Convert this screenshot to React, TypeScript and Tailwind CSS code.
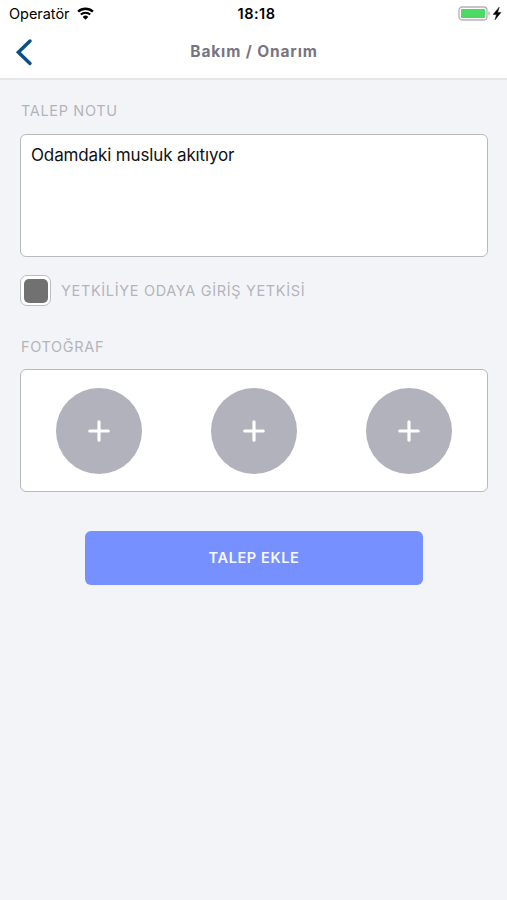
import type { ReactNode } from "react";

const PHOTO_SLOTS = [1, 2, 3];

function WifiIcon() {
  return (
    <svg width="17" height="13" viewBox="0 0 17 13" fill="none" className="-mt-[2px]" aria-hidden>
      <path d="M1.1 4.7a10.7 10.7 0 0 1 14.8 0" stroke="#000" strokeWidth="2.3" />
      <path d="M3.8 7.6a6.8 6.8 0 0 1 9.4 0" stroke="#000" strokeWidth="2.1" />
      <path d="M8.5 12.7 5.7 9.9a4 4 0 0 1 5.6 0Z" fill="#000" />
    </svg>
  );
}

function BatteryIcon() {
  return (
    <svg width="44" height="15" viewBox="0 0 44 15" fill="none" className="-mt-[2px]" aria-hidden>
      <rect x="1" y="1" width="28" height="13" rx="3.2" fill="#fff" stroke="#b5b2b6" strokeWidth="1.3" />
      <rect x="3" y="3" width="24" height="9" rx="1" fill="#4cd964" />
      <path d="M30.5 5.3c1.7.4 1.7 4 0 4.4Z" fill="#a9a9ab" />
      <path d="M41.2 1.2 35.2 8.4h3.4l-1.6 5.4 6-7.4h-3.4Z" fill="#000" stroke="#000" strokeWidth="0.5" />
    </svg>
  );
}

function StatusBar() {
  return (
    <div className="grid h-7 grid-cols-3 items-center text-black">
      <div className="flex items-center pl-[9px]">
        <span className="w-[68px] whitespace-nowrap text-[14.5px] leading-7 tracking-[-0.03px]">Operatör</span>
        <WifiIcon />
      </div>
      <span className="pl-[6px] text-center text-[14.5px] font-semibold leading-7 tracking-[0.5px]">18:18</span>
      <div className="flex justify-end pr-[5px]">
        <BatteryIcon />
      </div>
    </div>
  );
}

function Header() {
  return (
    <header className="h-20 border-b-2 border-[#e5e6e9] bg-white">
      <StatusBar />
      <div className="grid h-12 grid-cols-[60px_1fr_60px] items-center">
        <button type="button" aria-label="Geri" className="pl-[15px]">
          <svg width="18" height="28" viewBox="0 0 18 28" fill="none">
            <path d="M15 3 3.4 14.2 15 25.4" stroke="#0d4e86" strokeWidth="3.5" strokeLinecap="round" />
          </svg>
        </button>
        <h1 className="pl-px text-center text-[15.5px] font-bold leading-6 tracking-[0.87px] text-[#777582]">
          Bakım / Onarım
        </h1>
      </div>
    </header>
  );
}

function FieldLabel({ children }: { children: ReactNode }) {
  return (
    <p className="h-5 pl-px text-[14.5px] leading-5 tracking-[0.66px] text-[#b3b4ba]">{children}</p>
  );
}

export default function App() {
  return (
    <div className="h-[900px] w-[507px] overflow-hidden bg-[#f3f4f8] font-['Inter',sans-serif]">
      <Header />
      <main className="px-5 pt-[21px]">
        <FieldLabel>TALEP NOTU</FieldLabel>
        <div className="mt-[13px] h-[123px] w-[468px] rounded-md border border-[#b9babd] bg-white px-[10px] pt-2 text-[17px] leading-6 tracking-[-0.14px] text-[#111]">
          Odamdaki musluk akıtıyor
        </div>

        <div className="mt-[18px] flex items-center gap-[9px]">
          <div className="flex size-[31px] items-center justify-center rounded-[7px] border border-[#bdbec1] bg-white">
            <div className="size-6 rounded-[5px] bg-[#717171]" />
          </div>
          <FieldLabel>YETKİLİYE ODAYA GİRİŞ YETKİSİ</FieldLabel>
        </div>

        <div className="mt-[31px]">
          <FieldLabel>FOTOĞRAF</FieldLabel>
        </div>
        <div className="mt-3 grid h-[123px] w-[468px] grid-cols-3 items-center justify-items-center rounded-md border border-[#b9babd] bg-white">
          {PHOTO_SLOTS.map((slot) => (
            <button
              key={slot}
              type="button"
              aria-label={`Fotoğraf ${slot}`}
              className="flex size-[86px] items-center justify-center rounded-full bg-[#b1b2bb]"
            >
              <svg width="22" height="22" viewBox="0 0 22 22" fill="none">
                <path d="M11 1.8v18.4M1.8 11h18.4" stroke="#fff" strokeWidth="3.2" strokeLinecap="round" />
              </svg>
            </button>
          ))}
        </div>

        <button
          type="button"
          className="ml-[65px] mt-[39px] block h-[54px] w-[338px] rounded-md bg-[#7691ff] pb-px text-[14.5px] font-semibold tracking-[0.6px] text-[#f6f8ff]"
        >
          TALEP EKLE
        </button>
      </main>
    </div>
  );
}
